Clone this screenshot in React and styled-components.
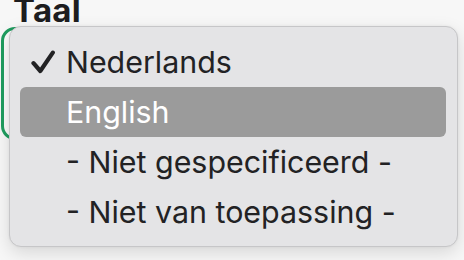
import React from 'react'
import styled, { createGlobalStyle } from 'styled-components'

const GlobalStyle = createGlobalStyle`
    html, body {
        margin: 0;
        padding: 0;
        background: #f7f7f7;
        font-family: Inter, 'Liberation Sans', sans-serif;
    }
`

const Page = styled.div`
    width: 464px;
    height: 260px;
    overflow: hidden;
    background: #f7f7f7;
`

const Label = styled.div`
    padding-left: 13px;
    font-size: 33px;
    font-weight: 700;
    line-height: 20px;
    letter-spacing: 0.3px;
    color: #1d1d1f;
`

const Field = styled.div`
    position: relative;
    margin-top: 7px;
`

const SelectBox = styled.div`
    margin-left: 1px;
    width: 440px;
    height: 113px;
    box-sizing: border-box;
    border: 3px solid #1f9d5f;
    border-radius: 14px;
    background: #fbfbfb;
`

const Menu = styled.ul`
    position: absolute;
    top: -1px;
    left: 9px;
    width: 449px;
    height: 221px;
    box-sizing: border-box;
    margin: 0;
    padding: 10px 11px 9px 10px;
    list-style: none;
    background: #e4e4e6;
    border: 1px solid #c6c6c8;
    border-radius: 12px;
    box-shadow: 0 6px 18px rgba(0, 0, 0, 0.13), 0 0 3px rgba(0, 0, 0, 0.06);
`

const Option = styled.li`
    display: flex;
    align-items: center;
    height: 50px;
    border-radius: 6px;
    font-size: 30.4px;
    line-height: 50px;
    white-space: nowrap;
    background: ${props => props.active ? '#9b9b9b' : 'transparent'};
    color: ${props => props.active ? '#ffffff' : '#222224'};
`

const CheckSlot = styled.span`
    display: flex;
    align-items: center;
    width: 46px;
    flex: none;
    padding-left: 11px;
    box-sizing: border-box;
`

const Check = () => (
    <svg width="24" height="24" viewBox="0 0 24 24">
        <path d="M2.5 13.2 L9.3 21 L21.8 2.6" fill="none" stroke="#222224"
            strokeWidth="4.2" strokeLinecap="round" strokeLinejoin="round" />
    </svg>
)

const options = [
    { label: 'Nederlands', checked: true },
    { label: 'English', active: true },
    { label: '- Niet gespecificeerd -' },
    { label: '- Niet van toepassing -' },
]

const App = () => {
    return (
        <Page>
            <GlobalStyle />
            <Label>Taal</Label>
            <Field>
                <SelectBox />
                <Menu>
                    {options.map(o => (
                        <Option key={o.label} active={o.active}>
                            <CheckSlot>{o.checked && <Check />}</CheckSlot>
                            {o.label}
                        </Option>
                    ))}
                </Menu>
            </Field>
        </Page>
    )
}

export default App
